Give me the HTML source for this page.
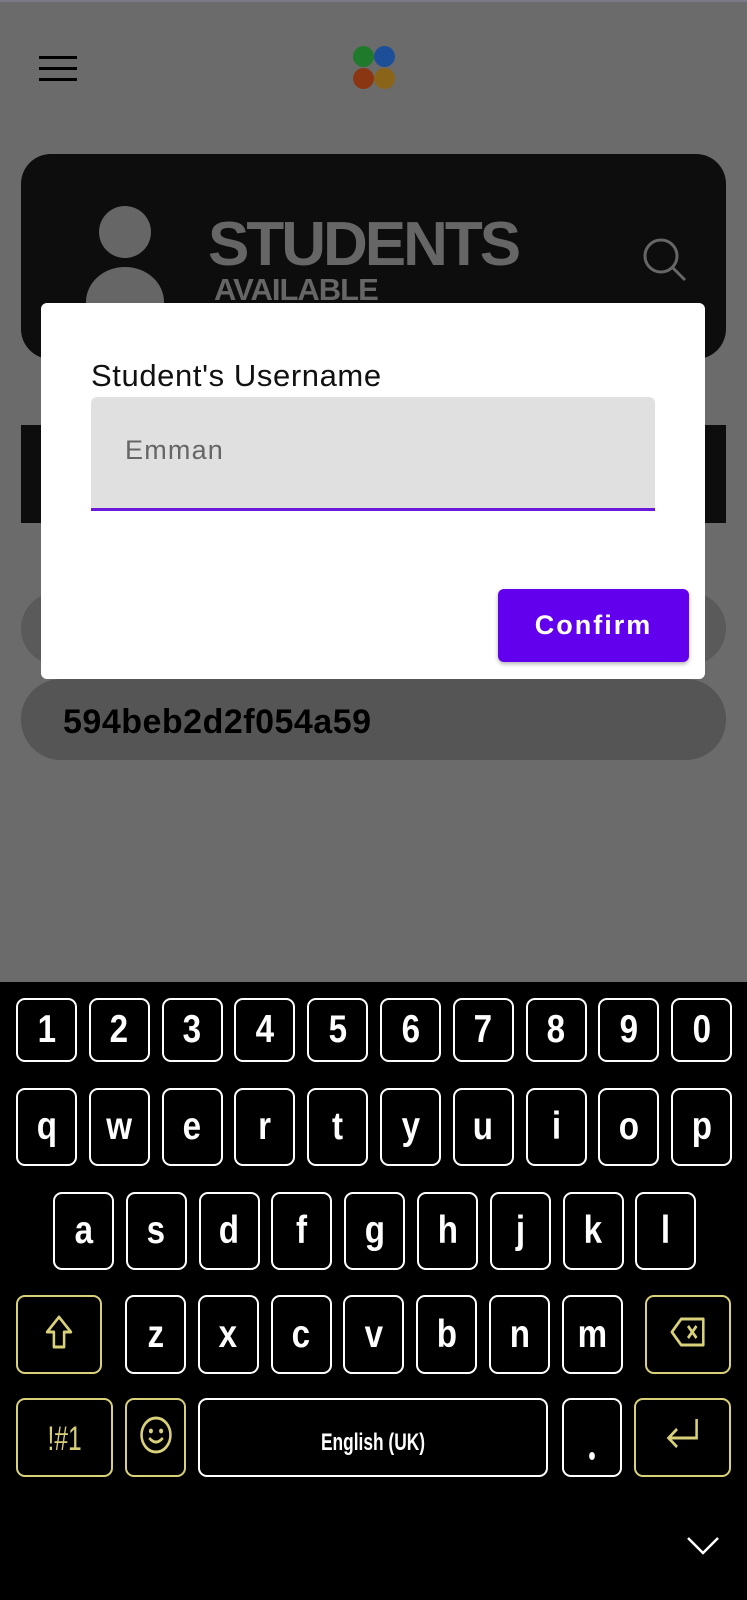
<!DOCTYPE html>
<html><head><meta charset="utf-8"><style>
*{margin:0;padding:0;box-sizing:border-box}
body{width:747px;height:1600px;position:relative;overflow:hidden;background:#6b6b6b;font-family:"Liberation Sans",sans-serif}
.a{position:absolute}
.k{position:absolute;border:2px solid #fff;border-radius:9px;background:#000;color:#fff;display:flex;align-items:center;justify-content:center;font-size:39px;font-weight:bold}
.k span{display:inline-block;transform:scaleX(.85)}
.y{border-color:#d9d07a;color:#d9d07a}
</style></head><body>
<div class="a" style="left:0;top:0;width:747px;height:2px;background:#7a7a88"></div>
<div class="a" style="left:39px;top:56px;width:38px;height:3px;background:#000"></div>
<div class="a" style="left:39px;top:67px;width:38px;height:3px;background:#000"></div>
<div class="a" style="left:39px;top:78px;width:38px;height:3px;background:#000"></div>
<div class="a" style="left:353px;top:46px;width:21px;height:21px;border-radius:50%;background:#1f7a2c"></div>
<div class="a" style="left:374px;top:46px;width:21px;height:21px;border-radius:50%;background:#1d4f98"></div>
<div class="a" style="left:353px;top:68px;width:21px;height:21px;border-radius:50%;background:#8a3612"></div>
<div class="a" style="left:374px;top:68px;width:21px;height:21px;border-radius:50%;background:#8a6519"></div>

<div class="a" style="left:21px;top:154px;width:705px;height:205px;border-radius:30px;background:#0d0d0d"></div>
<div class="a" style="left:99px;top:206px;width:52px;height:52px;border-radius:50%;background:#666"></div>
<div class="a" style="left:86px;top:267px;width:78px;height:70px;border-radius:50%;background:#666"></div>
<div class="a" style="left:208px;top:222px;font-size:62px;font-weight:bold;color:#666;letter-spacing:-3px;line-height:45px">STUDENTS</div>
<div class="a" style="left:214px;top:278px;font-size:31px;font-weight:bold;color:#666;line-height:23px;letter-spacing:-1px">AVAILABLE</div>
<svg class="a" style="left:640px;top:235px" width="50" height="50" viewBox="0 0 50 50"><circle cx="21" cy="21" r="16" fill="none" stroke="#666" stroke-width="3"/><path d="M33 33 L45 45" stroke="#666" stroke-width="3"/></svg>

<div class="a" style="left:21px;top:425px;width:705px;height:98px;background:#0d0d0d"></div>
<div class="a" style="left:21px;top:592px;width:705px;height:73px;border-radius:38px;background:#5a5a5a"></div>
<div class="a" style="left:21px;top:679px;width:705px;height:81px;border-radius:40px;background:#555"></div>
<div class="a" style="left:63px;top:704px;font-size:34px;font-weight:bold;color:#000;line-height:36px;letter-spacing:.5px">594beb2d2f054a59</div>

<div class="a" style="left:41px;top:303px;width:664px;height:376px;background:#fff;border-radius:6px"></div>
<div class="a" style="left:91px;top:360px;font-size:31px;color:#111;line-height:31px;letter-spacing:.6px">Student's Username</div>
<div class="a" style="left:91px;top:397px;width:564px;height:114px;background:#e0e0e0;border-radius:6px 6px 0 0;border-bottom:3px solid #6a1ad8"></div>
<div class="a" style="left:125px;top:437px;font-size:27px;color:#666;line-height:27px;letter-spacing:1.2px">Emman</div>
<div class="a" style="left:498px;top:589px;width:191px;height:73px;background:#6200ee;border-radius:6px;box-shadow:0 2px 4px rgba(0,0,0,.3);color:#fff;font-size:27px;font-weight:bold;letter-spacing:2px;display:flex;align-items:center;justify-content:center">Confirm</div>

<div class="a" style="left:0;top:982px;width:747px;height:618px;background:#000"></div>
<div id="kb"></div>
<script>
var kb=document.getElementById('kb'),h='';
function key(x,y,w,hh,t,c){h+='<div class="k '+(c||'')+'" style="left:'+x+'px;top:'+y+'px;width:'+w+'px;height:'+hh+'px"><span>'+t+'</span></div>';}
'1234567890'.split('').forEach(function(c,i){key(16+72.8*i,998,61,64,c)});
'qwertyuiop'.split('').forEach(function(c,i){key(16+72.8*i,1088,61,78,c)});
'asdfghjkl'.split('').forEach(function(c,i){key(53+72.8*i,1192,61,78,c)});
'zxcvbnm'.split('').forEach(function(c,i){key(125+72.8*i,1295,61,79,c)});
key(16,1295,86,79,'<svg width="36" height="40" viewBox="0 0 36 40" style="margin-top:6px"><path d="M18 4 L32 19 H24 V34 H12 V19 H4 Z" fill="none" stroke="#d9d07a" stroke-width="3" stroke-linejoin="round"/></svg>','y');
key(645,1295,86,79,'<svg width="44" height="32" viewBox="0 0 44 32" style="margin-top:4px"><path d="M14 3 H40 V29 H14 L3 16 Z" fill="none" stroke="#d9d07a" stroke-width="3" stroke-linejoin="round"/><path d="M22 10 L32 22 M32 10 L22 22" stroke="#d9d07a" stroke-width="3"/></svg>','y');
key(16,1398,97,79,'<span style="font-size:34px;font-weight:normal">!#1</span>','y');
key(125,1398,61,79,'<svg width="40" height="40" viewBox="0 0 40 40" style="margin-top:4px"><circle cx="20" cy="20" r="17" fill="none" stroke="#d9d07a" stroke-width="3"/><circle cx="14" cy="16" r="2.4" fill="#d9d07a"/><circle cx="26" cy="16" r="2.4" fill="#d9d07a"/><path d="M12 23 Q20 31 28 23" fill="none" stroke="#d9d07a" stroke-width="3"/></svg>','y');
key(198,1398,350,79,'<span style="font-size:24px;font-weight:bold">English (UK)</span>');
key(562,1398,60,79,'<span style="display:block;width:8px;height:8px;border-radius:50%;background:#fff;margin-top:36px"></span>');
key(634,1398,97,79,'<svg width="44" height="38" viewBox="0 0 44 38" style="margin-top:4px"><path d="M38 3 V22 H6 M15 13 L5 22 L15 31" fill="none" stroke="#d9d07a" stroke-width="3"/></svg>','y');
kb.innerHTML=h;
</script>
<svg class="a" style="left:686px;top:1535px" width="34" height="22" viewBox="0 0 34 22"><path d="M2 3 L17 18 L32 3" fill="none" stroke="#fff" stroke-width="2.5"/></svg>
</body></html>
